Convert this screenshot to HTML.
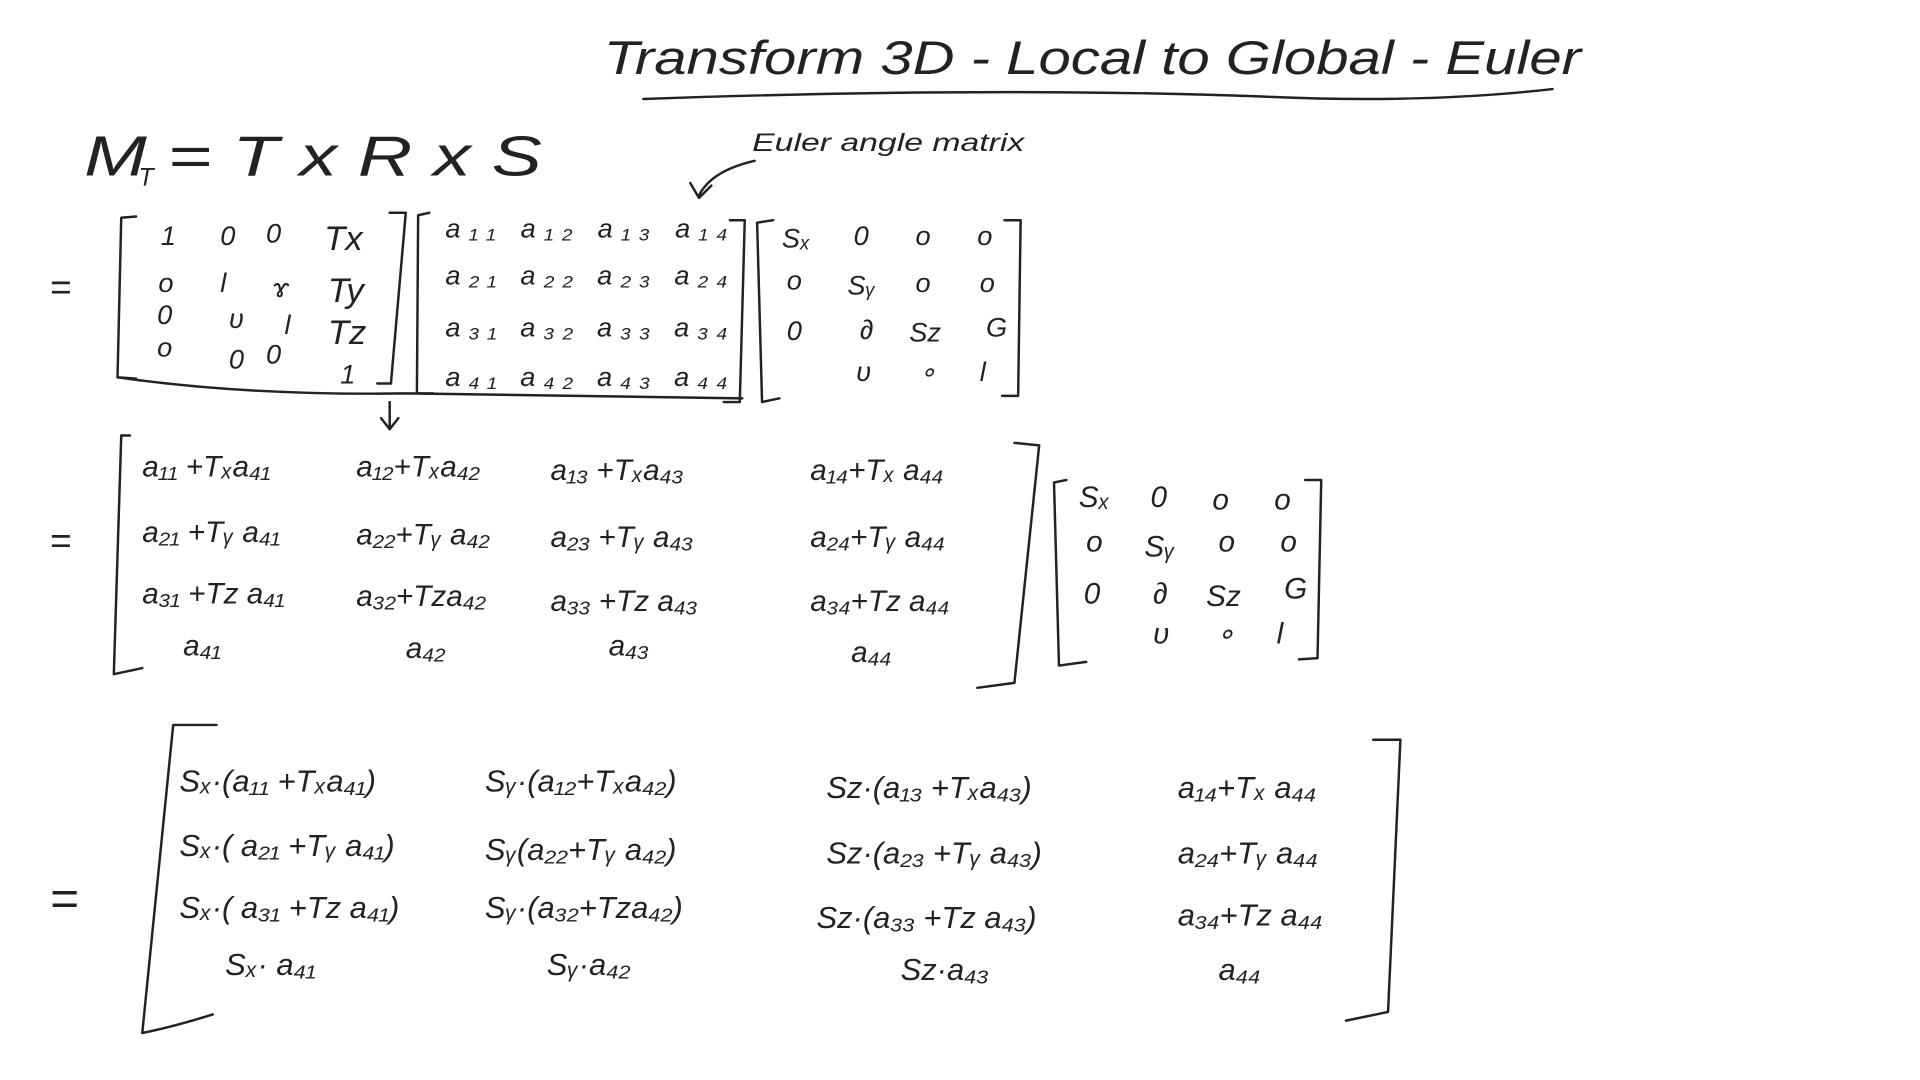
<!DOCTYPE html>
<html><head><meta charset="utf-8"><style>
html,body{margin:0;padding:0;background:#fff;width:1920px;height:1080px;overflow:hidden}
svg{display:block}
text{font-family:"Liberation Sans",sans-serif;fill:#222;font-style:italic}
.b{fill:none;stroke:#222;stroke-width:2;stroke-linecap:round;stroke-linejoin:round}
</style></head><body>
<svg width="1920" height="1080" viewBox="0 0 1552 873" preserveAspectRatio="none">
<text x="488" y="60" font-size="38" textLength="790" lengthAdjust="spacingAndGlyphs">Transform 3D - Local to Global - Euler</text>
<path class="b" d="M520 80 Q800 70 1020 78 Q1150 84 1255 72"/>
<text x="68" y="142" font-size="46" textLength="370" lengthAdjust="spacingAndGlyphs">M  = T x R x S</text>
<text x="112" y="150" font-size="20">T</text>
<text x="608" y="122" font-size="20" textLength="220" lengthAdjust="spacingAndGlyphs">Euler angle matrix</text>
<path class="b" d="M610 130 Q575 138 565 158 M558 148 L565 160 L575 150"/>
<text x="40" y="242" font-size="30">=</text>
<path class="b" d="M110 175 L98 176 L95 305 L110 306 M315 172 L328 172 L316 310 L305 310 M347 172 L338 174 L337 318 L350 318 M590 178 L602 178 L598 325 L585 325 M625 178 L612 180 L616 325 L630 322 M812 178 L825 178 L823 320 L810 320"/>
<path class="b" d="M95 305 Q200 320 330 318 Q460 320 600 322 M315 325 L315 345 M308 338 L315 347 L322 338"/>
<g font-size="22">
<text x="130" y="198">1</text><text x="178" y="198">0</text><text x="215" y="196">0</text><text x="262" y="202" font-size="28">Tx</text>
<text x="128" y="236">o</text><text x="178" y="236">l</text><text x="220" y="240">ɤ</text><text x="265" y="244" font-size="28">Ty</text>
<text x="127" y="262">0</text><text x="185" y="265">υ</text><text x="230" y="270">l</text><text x="265" y="278" font-size="28">Tz</text>
<text x="127" y="288">o</text><text x="185" y="298">0</text><text x="215" y="294">0</text><text x="275" y="310">1</text>
<text x="360" y="192" textLength="228" lengthAdjust="spacing">a₁₁  a₁₂  a₁₃  a₁₄</text>
<text x="360" y="230" textLength="228" lengthAdjust="spacing">a₂₁  a₂₂  a₂₃  a₂₄</text>
<text x="360" y="272" textLength="228" lengthAdjust="spacing">a₃₁  a₃₂  a₃₃  a₃₄</text>
<text x="360" y="312" textLength="228" lengthAdjust="spacing">a₄₁  a₄₂  a₄₃  a₄₄</text>
<text x="632" y="200">Sₓ</text><text x="690" y="198">0</text><text x="740" y="198">o</text><text x="790" y="198">o</text>
<text x="636" y="234">o</text><text x="685" y="238">Sᵧ</text><text x="740" y="236">o</text><text x="792" y="236">o</text>
<text x="636" y="275">0</text><text x="695" y="274">∂</text><text x="735" y="276">Sz</text><text x="797" y="272">G</text>
<text x="692" y="308">υ</text><text x="743" y="308">∘</text><text x="792" y="308">l</text>
</g>
<text x="40" y="447" font-size="30">=</text>
<path class="b" d="M105 352 L98 352 L92 545 L115 540 M820 358 L840 360 L820 552 L790 556 M862 388 L852 390 L856 538 L878 535 M1055 388 L1068 388 L1065 532 L1050 533"/>
<g font-size="24">
<text x="115" y="385">a₁₁ +Tₓa₄₁</text><text x="288" y="385">a₁₂+Tₓa₄₂</text><text x="445" y="388">a₁₃ +Tₓa₄₃</text><text x="655" y="388">a₁₄+Tₓ a₄₄</text>
<text x="115" y="438">a₂₁ +Tᵧ a₄₁</text><text x="288" y="440">a₂₂+Tᵧ a₄₂</text><text x="445" y="442">a₂₃ +Tᵧ a₄₃</text><text x="655" y="442">a₂₄+Tᵧ a₄₄</text>
<text x="115" y="488">a₃₁ +Tz a₄₁</text><text x="288" y="490">a₃₂+Tza₄₂</text><text x="445" y="494">a₃₃ +Tz a₄₃</text><text x="655" y="494">a₃₄+Tz a₄₄</text>
<text x="148" y="530">a₄₁</text><text x="328" y="532">a₄₂</text><text x="492" y="530">a₄₃</text><text x="688" y="535">a₄₄</text>
<text x="872" y="410">Sₓ</text><text x="930" y="410">0</text><text x="980" y="412">o</text><text x="1030" y="412">o</text>
<text x="878" y="446">o</text><text x="925" y="450">Sᵧ</text><text x="985" y="446">o</text><text x="1035" y="446">o</text>
<text x="876" y="488">0</text><text x="932" y="488">∂</text><text x="975" y="490">Sz</text><text x="1038" y="484">G</text>
<text x="932" y="520">υ</text><text x="983" y="520">∘</text><text x="1032" y="520">l</text>
</g>
<text x="40" y="740" font-size="40">=</text>
<path class="b" d="M175 586 L140 586 L115 835 Q140 830 172 820 M1110 598 L1132 598 L1122 818 L1088 825"/>
<g font-size="25">
<text x="145" y="640">Sₓ·(a₁₁ +Tₓa₄₁)</text><text x="392" y="640">Sᵧ·(a₁₂+Tₓa₄₂)</text><text x="668" y="645">Sz·(a₁₃ +Tₓa₄₃)</text><text x="952" y="645">a₁₄+Tₓ a₄₄</text>
<text x="145" y="692">Sₓ·( a₂₁ +Tᵧ a₄₁)</text><text x="392" y="695">Sᵧ(a₂₂+Tᵧ a₄₂)</text><text x="668" y="698">Sz·(a₂₃ +Tᵧ a₄₃)</text><text x="952" y="698">a₂₄+Tᵧ a₄₄</text>
<text x="145" y="742">Sₓ·( a₃₁ +Tz a₄₁)</text><text x="392" y="742">Sᵧ·(a₃₂+Tza₄₂)</text><text x="660" y="750">Sz·(a₃₃ +Tz a₄₃)</text><text x="952" y="748">a₃₄+Tz a₄₄</text>
<text x="182" y="788">Sₓ· a₄₁</text><text x="442" y="788">Sᵧ·a₄₂</text><text x="728" y="792">Sz·a₄₃</text><text x="985" y="792">a₄₄</text>
</g>
</svg>
</body></html>
